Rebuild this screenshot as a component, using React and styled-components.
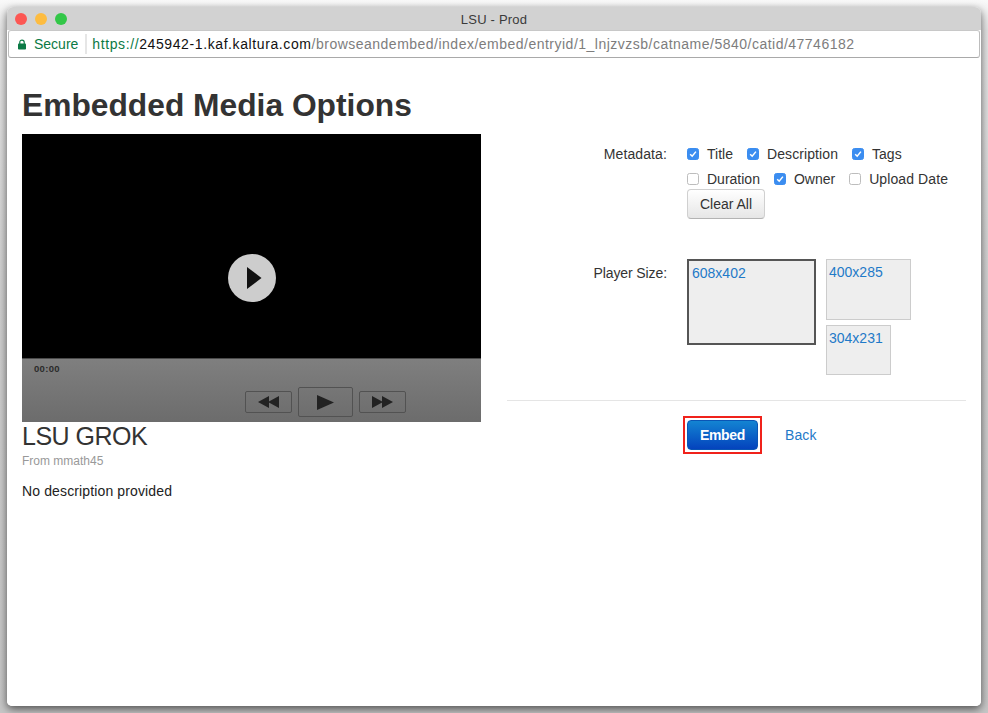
import React from 'react';
import styled, { createGlobalStyle } from 'styled-components';

const Global = createGlobalStyle`
  html, body { margin: 0; padding: 0; height: 100%; background: #f4f4f4; overflow: hidden; }
  body { font-family: "Liberation Sans", Arial, sans-serif; color: #333; }
`;
const Stage = styled.div`
  width: 988px; height: 713px; box-sizing: border-box; padding: 7px;
  background: linear-gradient(#f9f9f9 0, #e4e4e4 30px, #cfcfcf 300px, #c6c6c6 100%);
  overflow: hidden;
`;
const Win = styled.div`
  width: 974px; height: 699px; border-radius: 6px 6px 5px 5px; overflow: hidden;
  background: #fff; display: flex; flex-direction: column;
  box-shadow: 0 3px 8px rgba(0,0,0,.6);
`;
const TitleBar = styled.div`
  height: 23px; flex: none; background: #d2d2d2; position: relative;
  display: flex; align-items: center; justify-content: center;
  font-size: 13px; color: #3a3a3a; padding-top: 1px; box-sizing: border-box; letter-spacing: .2px;
`;
const Lights = styled.div`
  position: absolute; left: 8px; top: 6px; display: flex; gap: 8px;
`;
const Light = styled.span`
  width: 12px; height: 12px; border-radius: 50%; background: ${p => p.$c};
`;
const AddressBar = styled.div`
  height: 28px; flex: none; margin: 0 1px; box-sizing: border-box;
  background: #fff; border: 1px solid #bdbdbd; border-top-color: #c8c8c8; border-bottom-color: #a9a9a9; border-radius: 3px;
  display: flex; align-items: center; font-size: 14px; white-space: nowrap;
  padding-left: 9px;
`;
const Secure = styled.span`
  display: flex; align-items: center; gap: 8px; color: #0b7a45; height: 20px; padding-right: 7px;
  border-right: 2px solid #e6e6e6; margin-right: 5px;
`;
const UrlScheme = styled.span` color: #0b7a45; letter-spacing: .6px; `;
const UrlHost = styled.span` color: #111; letter-spacing: .6px; `;
const UrlPath = styled.span` color: #7d7d7d; letter-spacing: .49px; `;
const Page = styled.div`
  flex: 1; padding: 28px 15px 0 15px; background: #fff;
`;
const Heading = styled.h1`
  margin: 0 0 10px; font-size: 31.75px; line-height: 38px; font-weight: 700; color: #333;
`;
const Columns = styled.div`
  display: flex; gap: 26px; align-items: flex-start;
`;
const Left = styled.div` width: 459px; flex: none; `;
const Right = styled.div` width: 459px; flex: none; padding-top: 7px; `;
const Player = styled.div`
  height: 288px; display: flex; flex-direction: column; background: #000; position: relative;
`;
const Screen = styled.div` flex: 1; `;
const BigPlay = styled.div`
  position: absolute; left: 206px; top: 120px; padding-left: 3px; box-sizing: border-box;
  width: 48px; height: 48px; border-radius: 50%; background: #cdcdcd;
  display: flex; align-items: center; justify-content: center;
`;
const Controls = styled.div`
  height: 64px; flex: none; box-sizing: border-box; position: relative;
  background: linear-gradient(#7f7f7f, #6c6c6c); border-top: 1px solid #4a4a4a;
`;
const Time = styled.div`
  position: absolute; left: 12px; top: 4px; font-size: 9.5px; line-height: 11px; font-weight: 700; color: #2b2b2b; letter-spacing: .3px;
`;
const Transport = styled.div`
  position: absolute; left: 223px; top: 28px; display: flex; align-items: center; gap: 6px; height: 30px;
`;
const TButton = styled.div`
  width: ${p => p.$w}px; height: ${p => p.$h}px; box-sizing: border-box;
  border: 1px solid #525252; border-radius: 2px; display: flex; align-items: center; justify-content: center;
`;
const MediaTitle = styled.h2`
  margin: 1px 0 0; font-size: 25px; line-height: 27px; font-weight: 400; color: #333; letter-spacing: -.5px;
`;
const From = styled.div`
  font-size: 12px; line-height: 14px; color: #999; margin-top: 4px;
`;
const Desc = styled.p`
  margin: 15px 0 0; font-size: 14px; line-height: 16px; color: #222; letter-spacing: .13px;
`;
const FormRow = styled.div`
  display: flex; align-items: flex-start; margin-top: ${p => p.$mt || 0}px;
`;
const Label = styled.div`
  width: 160px; flex: none; text-align: right; font-size: 14px; line-height: 20px; color: #333;
  padding-top: ${p => p.$pt || 0}px; letter-spacing: ${p => p.$ls || 0}px;
`;
const Field = styled.div`
  margin-left: 20px; flex: 1;
`;
const CheckRow = styled.div`
  display: flex; height: 25px; align-items: center; font-size: 14px; color: #333;
`;
const Check = styled.label`
  display: flex; align-items: center; margin-right: ${p => p.$mr}px; letter-spacing: ${p => p.$ls || 0}px;
`;
const Box = styled.span`
  width: 12px; height: 12px; box-sizing: border-box; border-radius: 2.5px; margin-right: 8px;
  border: 1px solid ${p => p.$on ? '#3b8df0' : '#bdbdbd'};
  background: ${p => p.$on ? '#3b8df0' : '#fff'};
  display: flex; align-items: center; justify-content: center;
`;
const ClearAll = styled.button`
  display: block; margin-top: -2px; width: 78px; height: 30px; padding: 0; box-sizing: border-box;
  font: 14px "Liberation Sans", Arial, sans-serif; color: #333;
  background: linear-gradient(#ffffff, #e6e6e6); border: 1px solid #d0d0d0; border-bottom-color: #b3b3b3; border-radius: 4px;
`;
const Sizes = styled.div`
  display: flex; gap: 10px; align-items: flex-start;
`;
const SizeCol = styled.div`
  display: flex; flex-direction: column; gap: 5px; align-items: flex-start;
`;
const SizeBox = styled.div`
  width: ${p => p.$w}px; height: ${p => p.$h}px; box-sizing: border-box;
  background: #eee; border: ${p => p.$on ? '2px solid #555' : '1px solid #ccc'};
  color: #1f7ac8; font-size: 14px; line-height: 20px; padding: ${p => p.$on ? '2px 3px' : '2px'};
`;
const Divider = styled.hr`
  border: 0; border-top: 1px solid #e5e5e5; margin: 25px 0 15px;
`;
const Actions = styled.div`
  display: flex; align-items: center; padding-left: 176px;
`;
const EmbedFrame = styled.div`
  border: 2px solid #f0221b; padding: 2px; width: 79px; height: 38px; box-sizing: border-box;
`;
const Embed = styled.button`
  width: 71px; height: 30px; padding: 0; display: block; box-sizing: border-box;
  font: 700 14px "Liberation Sans", Arial, sans-serif; letter-spacing: -.3px; color: #fff;
  background: linear-gradient(#1384d2, #0443bd); border: 1px solid #0a55b5; border-radius: 4px;
`;
const Back = styled.a`
  margin-left: 23px; color: #1f7ac8; font-size: 14px; letter-spacing: .1px;
`;

const Tick = () => (
  <svg width="8" height="8" viewBox="0 0 8 8"><path d="M1.2 4.2 3.2 6.2 6.9 1.6" fill="none" stroke="#fff" strokeWidth="1.5" /></svg>
);
const CheckItem = ({ on, mr, ls, children }) => (
  <Check $mr={mr} $ls={ls}>
    <Box $on={on}>{on && <Tick />}</Box>
    {children}
  </Check>
);

export default function App() {
  return (
    <Stage>
      <Global />
      <Win>
        <TitleBar>
          <Lights>
            <Light $c="#fc5753" /><Light $c="#fdbc40" /><Light $c="#33c748" />
          </Lights>
          LSU - Prod
        </TitleBar>
        <AddressBar>
          <Secure>
            <svg width="8" height="11" viewBox="0 0 9 11">
              <rect x="0" y="4.5" width="9" height="6.5" rx="1" fill="#0b7a45" />
              <path d="M2 5V3a2.5 2.5 0 0 1 5 0v2" fill="none" stroke="#0b7a45" strokeWidth="1.3" />
            </svg>
            Secure
          </Secure>
          <UrlScheme>https://</UrlScheme><UrlHost>245942-1.kaf.kaltura.com</UrlHost>
          <UrlPath>/browseandembed/index/embed/entryid/1_lnjzvzsb/catname/5840/catid/47746182</UrlPath>
        </AddressBar>
        <Page>
          <Heading>Embedded Media Options</Heading>
          <Columns>
            <Left>
              <Player>
                <Screen />
                <BigPlay>
                  <svg width="16" height="22" viewBox="0 0 16 22"><path d="M1 0 15.5 11 1 22Z" fill="#111" /></svg>
                </BigPlay>
                <Controls>
                  <Time>00:00</Time>
                  <Transport>
                    <TButton $w={47} $h={22}>
                      <svg width="21" height="12" viewBox="0 0 21 12"><path d="M0 6 11 0V12ZM10 6 21 0V12Z" fill="#222" /></svg>
                    </TButton>
                    <TButton $w={55} $h={30}>
                      <svg width="17" height="15" viewBox="0 0 17 15"><path d="M0 0 17 7.5 0 15Z" fill="#222" /></svg>
                    </TButton>
                    <TButton $w={47} $h={22}>
                      <svg width="21" height="12" viewBox="0 0 21 12"><path d="M21 6 10 0V12ZM11 6 0 0V12Z" fill="#222" /></svg>
                    </TButton>
                  </Transport>
                </Controls>
              </Player>
              <MediaTitle>LSU GROK</MediaTitle>
              <From>From mmath45</From>
              <Desc>No description provided</Desc>
            </Left>
            <Right>
              <FormRow>
                <Label $pt={3} $ls={0.1}>Metadata:</Label>
                <Field>
                  <CheckRow>
                    <CheckItem on mr={14}>Title</CheckItem>
                    <CheckItem on mr={14} ls={0.1}>Description</CheckItem>
                    <CheckItem on mr={0}>Tags</CheckItem>
                  </CheckRow>
                  <CheckRow>
                    <CheckItem mr={14}>Duration</CheckItem>
                    <CheckItem on mr={14}>Owner</CheckItem>
                    <CheckItem mr={0} ls={0.1}>Upload Date</CheckItem>
                  </CheckRow>
                  <ClearAll>Clear All</ClearAll>
                </Field>
              </FormRow>
              <FormRow $mt={40}>
                <Label $pt={4} $ls={-0.1}>Player Size:</Label>
                <Field>
                  <Sizes>
                    <SizeBox $on $w={129} $h={86}>608x402</SizeBox>
                    <SizeCol>
                      <SizeBox $w={85} $h={61}>400x285</SizeBox>
                      <SizeBox $w={65} $h={50}>304x231</SizeBox>
                    </SizeCol>
                  </Sizes>
                </Field>
              </FormRow>
              <Divider />
              <Actions>
                <EmbedFrame><Embed>Embed</Embed></EmbedFrame>
                <Back>Back</Back>
              </Actions>
            </Right>
          </Columns>
        </Page>
      </Win>
    </Stage>
  );
}
